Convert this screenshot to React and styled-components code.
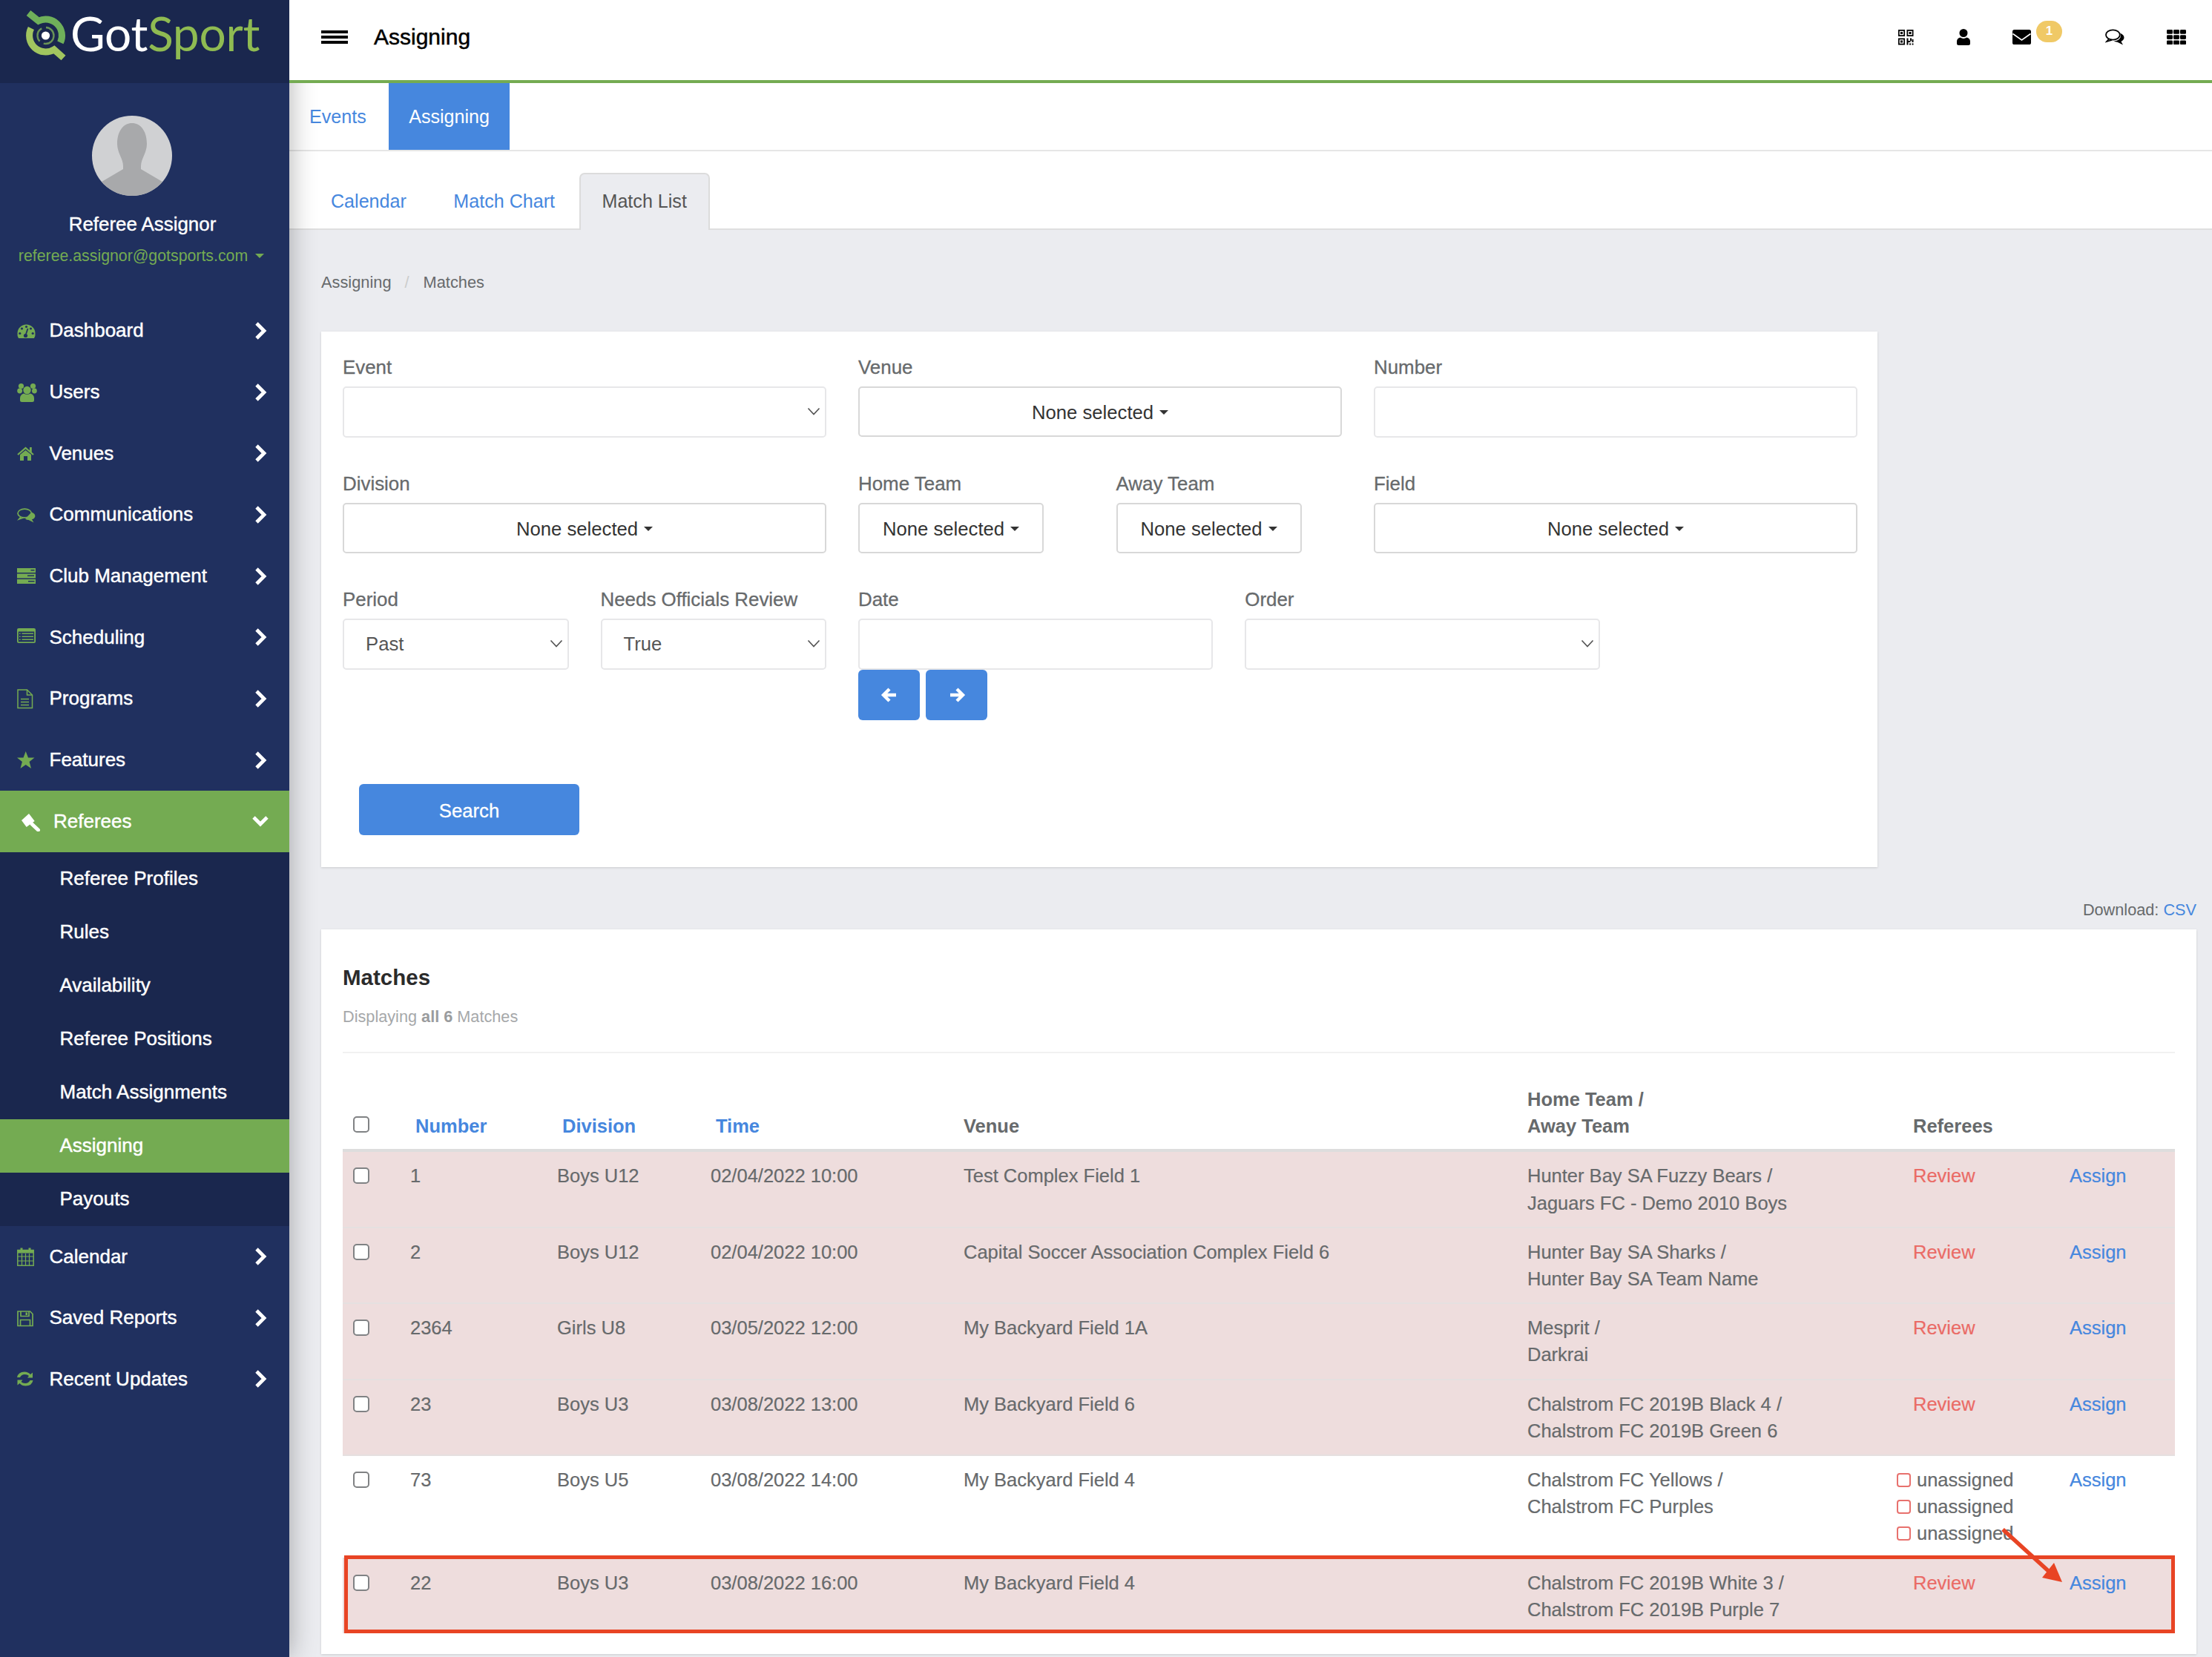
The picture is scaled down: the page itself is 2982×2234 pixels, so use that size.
import React from "react";
import styled, { createGlobalStyle } from "styled-components";

const GREEN = "#74ab52";
const BLUE = "#4687de";
const NAVY = "#20305f";
const DARK = "#1a274e";
const TEXT = "#676a6c";

const Global = createGlobalStyle`
  html, body { margin: 0; padding: 0; background: #ebecf0; }
  body { width: 2982px; height: 2234px; overflow: hidden; font-family: "Liberation Sans", Arial, sans-serif; font-size: 25.7px; color: ${TEXT}; }
  * { box-sizing: border-box; }
`;

const Page = styled.div`
  display: flex;
  width: 2982px;
  height: 2234px;
  overflow: hidden;
`;

/* ---------- sidebar ---------- */
const Sidebar = styled.aside`
  position: relative;
  z-index: 1;
  flex: 0 0 390px;
  height: 2234px;
  background: ${NAVY};
  box-shadow: 0 0 34px rgba(0, 0, 0, 0.32);
`;
const LogoBar = styled.div`
  height: 112px;
  background: ${DARK};
  display: flex;
  align-items: flex-start;
  padding: 5px 0 0 30px;
`;
const LogoWord = styled.div`
  font-family: Lato, "Liberation Sans", sans-serif;
  font-size: 64px;
  line-height: 74px;
  margin-top: 3px;
  letter-spacing: -0.3px;
  color: #fff;
  margin-left: 5px;
  span { color: #8fbb52; }
`;
const Profile = styled.div`
  height: 292.5px;
  display: flex;
  flex-direction: column;
  align-items: center;
  padding-top: 44px;
`;
const Avatar = styled.div`
  width: 108px;
  height: 108px;
  border-radius: 50%;
  overflow: hidden;
  background: #d0d1d3;
  margin-left: -34px;
  svg { display: block; }
`;
const ProfileName = styled.div`
  margin: 19px 0 0 -6px;
  color: #fff;
  font-size: 25.9px;
  line-height: 38px;
  -webkit-text-stroke: 0.4px #fff;
`;
const ProfileMail = styled.div`
  margin: 9px 0 0 -9px;
  color: ${GREEN};
  font-size: 21.3px;
  line-height: 30px;
  white-space: nowrap;
  display: flex;
  align-items: center;
  gap: 10px;
`;
const Caret = styled.i`
  display: inline-block;
  width: 0;
  height: 0;
  border-left: ${(p) => p.$size || 6}px solid transparent;
  border-right: ${(p) => p.$size || 6}px solid transparent;
  border-top: ${(p) => p.$size || 6}px solid ${(p) => p.$color || "#333"};
`;
const NavList = styled.nav`
  display: flex;
  flex-direction: column;
`;
const NavRow = styled.div`
  display: flex;
  align-items: center;
  height: 82.7px;
  padding: 0 ${(p) => (p.$open ? 27 : 30)}px 0 ${(p) => (p.$open ? 29 : 23)}px;
  background: ${(p) => (p.$open ? GREEN : "transparent")};
  color: #fff;
  font-size: 26px;
  -webkit-text-stroke: 0.45px #fff;
`;
const NavIconBox = styled.span`
  flex: 0 0 ${(p) => (p.$open ? 43 : 43.5)}px;
  height: 28px;
  svg { display: block; }
`;
const NavChevron = styled.svg`
  margin-left: auto;
  display: block;
`;
const SubList = styled.div`
  background: ${DARK};
`;
const SubRow = styled.div`
  height: 72px;
  padding-left: 80.5px;
  display: flex;
  align-items: center;
  color: #fff;
  font-size: 26px;
  background: ${(p) => (p.$active ? GREEN : "transparent")};
  -webkit-text-stroke: 0.45px #fff;
`;

/* ---------- main ---------- */
const Main = styled.main`
  flex: 1;
  min-width: 0;
  height: 2234px;
  display: flex;
  flex-direction: column;
`;
const TopBar = styled.header`
  position: relative;
  z-index: 2;
  height: 112px;
  flex: none;
  background: #fff;
  border-bottom: 4px solid ${GREEN};
  display: flex;
  align-items: center;
  padding: 0 35px 8px 43px;
`;
const PageTitle = styled.div`
  margin-left: 35px;
  font-size: 30px;
  color: #000;
  -webkit-text-stroke: 0.5px #000;
`;
const TopIcons = styled.div`
  margin-left: auto;
  display: flex;
  align-items: center;
  gap: 57.5px;
  svg { display: block; }
`;
const MailWrap = styled.div`
  position: relative;
  width: 67px;
`;
const Badge = styled.span`
  position: absolute;
  left: 32px;
  top: -12px;
  width: 35px;
  height: 29px;
  border-radius: 15px;
  background: #f0c966;
  color: #fff;
  font-size: 17px;
  font-weight: 700;
  line-height: 27px;
  text-align: center;
`;
const PrimaryTabs = styled.div`
  flex: none;
  height: 92px;
  background: #fff;
  border-bottom: 2px solid #e6e6e6;
  display: flex;
  gap: 3.5px;
`;
const PrimaryTab = styled.a`
  height: 90px;
  padding: 0 27px;
  display: flex;
  align-items: center;
  font-size: 25.1px;
  color: ${(p) => (p.$active ? "#fff" : BLUE)};
  background: ${(p) => (p.$active ? BLUE : "transparent")};
`;
const SubTabs = styled.div`
  flex: none;
  height: 106px;
  background: #fff;
  border-bottom: 2px solid #dfdfdf;
  padding: 29px 0 0 25px;
  display: flex;
  gap: 1.5px;
`;
const SubTab = styled.a`
  height: 77px;
  padding: 0 29px 2px;
  display: flex;
  align-items: center;
  font-size: 25.1px;
  border: 2px solid ${(p) => (p.$active ? "#dcdcdc" : "transparent")};
  border-bottom: 0;
  border-radius: 7px 7px 0 0;
  background: ${(p) => (p.$active ? "#ebecf0" : "transparent")};
  color: ${(p) => (p.$active ? "#555" : BLUE)};
  margin-bottom: -2px;
`;
const Content = styled.div`
  flex: 1;
  padding: 55px 21px 0 43px;
  background: #ebecf0;
`;
const Breadcrumb = styled.div`
  display: flex;
  height: 32px;
  align-items: center;
  font-size: 21.8px;
  color: ${TEXT};
  span { color: #ccc; margin: 0 19px 0 18px; }
`;
const FormCard = styled.section`
  margin-top: 50px;
  width: 2098px;
  height: 722px;
  background: #fff;
  padding: 30px 27px 0 29px;
  box-shadow: 0 1px 3px rgba(0, 0, 0, 0.14);
`;
const FormGrid = styled.div`
  display: grid;
  grid-template-columns: repeat(12, 1fr);
  column-gap: 43px;
  row-gap: 44px;
`;
const Field = styled.div`
  grid-column: ${(p) => p.$col} / span ${(p) => p.$span};
`;
const Label = styled.div`
  height: 36px;
  line-height: 36px;
  margin-bottom: 8px;
  font-size: 25.9px;
  color: ${TEXT};
  -webkit-text-stroke: 0.3px ${TEXT};
`;
const Control = styled.div`
  position: relative;
  height: 69px;
  border: 2px solid #e7e7e9;
  border-radius: 5px;
  background: #fff;
  padding: 0 29px;
  display: flex;
  align-items: center;
  color: #555;
`;
const SelectChevron = styled.svg`
  position: absolute;
  right: 6px;
  top: 25px;
`;
const MultiButton = styled.div`
  height: 68px;
  padding-top: 2px;
  width: ${(p) => (p.$narrow ? "250px" : "100%")};
  border: 2px solid #d8d8d8;
  border-radius: 5px;
  background: #fff;
  display: flex;
  align-items: center;
  justify-content: center;
  gap: 8px;
  color: #333;
`;
const ArrowRow = styled.div`
  display: flex;
  gap: 8px;
`;
const ArrowButton = styled.button`
  width: 83px;
  height: 68px;
  border: 0;
  border-radius: 6px;
  background: ${BLUE};
  padding: 0;
  display: flex;
  align-items: center;
  justify-content: center;
`;
const SearchButton = styled.button`
  display: block;
  margin: 86px 0 0 22px;
  width: 297px;
  height: 69px;
  border: 0;
  border-radius: 6px;
  background: ${BLUE};
  padding: 3px 0 0;
  color: #fff;
  font: 25.7px "Liberation Sans", Arial, sans-serif;
  -webkit-text-stroke: 0.3px #fff;
`;
const DownloadLine = styled.div`
  margin-top: 42px;
  height: 32px;
  line-height: 32px;
  text-align: right;
  font-size: 21.7px;
  color: ${TEXT};
  a { color: ${BLUE}; }
`;
const MatchesCard = styled.section`
  position: relative;
  margin-top: 10px;
  height: 977px;
  background: #fff;
  padding: 47px 29px 0 29px;
  box-shadow: 0 1px 3px rgba(0, 0, 0, 0.14);
`;
const Heading = styled.h2`
  margin: 0;
  height: 36px;
  line-height: 36px;
  font-size: 29.5px;
  font-weight: 700;
  color: #2b2b2b;
`;
const Summary = styled.div`
  margin-top: 19px;
  height: 32px;
  line-height: 32px;
  font-size: 21.7px;
  color: #a6a8aa;
  b { font-weight: 700; color: #9a9c9e; }
`;
const Rule = styled.hr`
  margin: 31px 0 44px;
  height: 2px;
  border: 0;
  background: #f1f1f1;
`;
const Table = styled.table`
  width: 2470px;
  table-layout: fixed;
  border-collapse: separate;
  border-spacing: 0;
  font-size: 25.5px;
  line-height: 36.2px;
`;
const Col = styled.col`
  width: ${(p) => p.$w}px;
`;
const Th = styled.th`
  padding: 0 11px 13px;
  text-align: left;
  vertical-align: bottom;
  font-weight: 700;
  color: ${TEXT};
  border-bottom: 4px solid #ddd;
  a { color: ${BLUE}; padding-left: 7px; }
`;
const Tr = styled.tr`
  background: ${(p) => (p.$flag ? "#eedddd" : "#fff")};
  &:not(:first-child) td { border-top: 2px solid #e5e0e0; }
`;
const Td = styled.td`
  padding: 14px 11px;
  vertical-align: top;
  color: ${TEXT};
  white-space: nowrap;
  -webkit-text-stroke: 0.2px;
`;
const Check = styled.input.attrs({ type: "checkbox" })`
  appearance: none;
  display: block;
  width: 22px;
  height: 22px;
  margin: ${(p) => (p.$head ? "0 0 9px 3px" : "7px 0 0 3px")};
  background: #fff;
  border: 2px solid #808284;
  border-radius: 5px;
`;
const Review = styled.a`
  color: #ea6b66;
`;
const Assign = styled.a`
  color: ${BLUE};
`;
const Unassigned = styled.div`
  display: flex;
  align-items: center;
  gap: 8px;
  margin-left: -22px;
  i {
    display: block;
    width: 19px;
    height: 19px;
    border: 2px solid #e8716d;
    border-radius: 4px;
  }
`;
const Highlight = styled.div`
  position: absolute;
  left: 31px;
  top: 844px;
  width: 2468px;
  height: 105px;
  border: 5px solid #e84424;
  pointer-events: none;
`;
const Pointer = styled.svg`
  position: absolute;
  left: 2257px;
  top: 799px;
  pointer-events: none;
`;

/* ---------- icons ---------- */
const g = GREEN;
const NavGlyphs = {
  dash: (
    <>
      <path d="M2 24Q0 21 .5 17.5A12 12 0 0 1 24.5 17.5Q25 21 23 24Z" fill={g} />
      <g fill={NAVY}>
        <circle cx="3.8" cy="17.5" r="1.6" /><circle cx="6.5" cy="11" r="1.6" /><circle cx="12.5" cy="8.5" r="1.6" /><circle cx="18.5" cy="11" r="1.6" /><circle cx="21.2" cy="17.5" r="1.6" /><circle cx="11.5" cy="20.5" r="2.6" />
      </g>
      <path d="M11.5 20L14.5 11" stroke={NAVY} strokeWidth="1.8" />
    </>
  ),
  users: (
    <g fill={g}>
      <circle cx="5.5" cy="5.5" r="3.6" /><circle cx="21.5" cy="5.5" r="3.6" /><circle cx="3.6" cy="12" r="3.4" /><circle cx="23.4" cy="12" r="3.4" /><circle cx="13.5" cy="11" r="5.2" />
      <path d="M6.5 27Q4 27 4 24.5V22Q4 17 9 15.5Q13.5 18 18 15.5Q23 17 23 22V24.5Q23 27 20.5 27Z" />
    </g>
  ),
  home: (
    <>
      <path d="M1 16L11.5 7L22 16" fill="none" stroke={g} strokeWidth="2.2" />
      <path d="M17 6h2.8v7H17zM4 16L11.5 10L19 16V24H14V18H9V24H4Z" fill={g} />
    </>
  ),
  chat: (
    <g fill="none" stroke={g} strokeWidth="1.7">
      <ellipse cx="10.2" cy="12" rx="9.2" ry="5.8" />
      <path d="M5 17L2.5 20L9 17.8" />
      <path d="M19.5 10.5Q25 12.5 24.3 16.5Q23.5 19.5 20 20.2L22.5 24.5L15.5 21Q13 21 11 19.5" fill={g} stroke="none" />
    </g>
  ),
  server: (
    <>
      <path d="M0 3h25v6H0zM0 10.5h25v6H0zM0 18h25v6H0z" fill={g} />
      <path d="M18.5 5h5v1.4h-5zM14 12.5h9v1.4h-9zM15 20h8.5v1.4H15z" fill={NAVY} />
    </>
  ),
  list: (
    <>
      <rect x="0" y="2" width="25" height="20" rx="2.2" fill={g} />
      <rect x="1.8" y="6.5" width="21.4" height="13.8" fill={NAVY} />
      <path d="M6.5 9.2H22M6.5 13.2H22M6.5 17.2H22" stroke={g} strokeWidth="1.6" />
      <path d="M3 8.5h1.6v1.5H3zM3 12.5h1.6v1.5H3zM3 16.5h1.6v1.5H3z" fill={g} />
    </>
  ),
  file: (
    <g fill="none" stroke={g} strokeWidth="1.5">
      <path d="M1 2H13.5L20.5 9V26.5H1Z" />
      <path d="M13.5 2V9H20.5" />
      <path d="M5 14.5H16M5 18.5H16M5 22.5H16" strokeWidth="1.7" />
    </g>
  ),
  star: <path d="M11.7 2L15 10.5H23.5L16.6 16L19 25L11.7 20L4.5 25L6.9 16L0 10.5H8.5Z" fill={g} />,
  gavel: (
    <>
      <path d="M0 13L10 4L17.7 14L6.7 22Z" fill="#fff" />
      <path d="M14 18L22.5 26" stroke="#fff" strokeWidth="5" strokeLinecap="round" />
    </>
  ),
  calendar: (
    <g fill="none" stroke={g}>
      <rect x=".8" y="5.5" width="21.4" height="20.7" strokeWidth="1.5" />
      <path d="M1 7.5H22" strokeWidth="4" />
      <path d="M6 2.5V7M17 2.5V7" strokeWidth="3" />
      <path d="M1 14H22M1 20H22M6.5 10V26M11.5 10V26M16.5 10V26" strokeWidth="1.2" />
    </g>
  ),
  save: (
    <g fill="none" stroke={g} strokeWidth="1.7">
      <path d="M1 5H17.5L21 8.5V24.5H1Z" />
      <path d="M5 5V11.5H16V5M4.5 24.5V16.5H17.5V24.5" />
      <path d="M11.5 6.5h2.5V10h-2.5z" fill={g} stroke="none" />
    </g>
  ),
  refresh: (
    <g fill={g}>
      <path d="M0 12Q1.5 4.5 10 4.5Q15 4.5 18 8L21 5.5V12.5H14L16 10Q14 8 10.5 8Q6 8 4 12Z" />
      <path d="M21.5 16Q20 23.5 11.5 23.5Q6.5 23.5 3.5 20L.5 22.5V15.5H7.5L5.5 18Q7.5 20 11 20Q15.5 20 17.5 16Z" />
    </g>
  ),
};

const NavGlyph = ({ name }) => (
  <svg width="28" height="28" viewBox="0 0 28 28">{NavGlyphs[name]}</svg>
);

const Chevron = () => (
  <NavChevron width="17" height="26" viewBox="0 0 17 26">
    <path d="M3 3L13 13L3 23" fill="none" stroke="#fff" strokeWidth="4.8" />
  </NavChevron>
);
const ChevronDown = () => (
  <NavChevron width="24" height="16" viewBox="0 0 24 16">
    <path d="M3 3L12 12L21 3" fill="none" stroke="#fff" strokeWidth="4.8" />
  </NavChevron>
);

const Logo = () => (
  <svg width="60" height="80" viewBox="30 5 60 80">
    <g fill="none" strokeWidth="9">
      <path d="M38.5 17.5L51.9 28.2A22 22 0 0 1 81.4 57.4" stroke="#6fb05a" />
      <path d="M41.9 38.1A22 22 0 0 0 72.9 66.8L85.5 78" stroke="#a1c55f" />
      <circle cx="61.5" cy="48" r="11" stroke="#84b85a" strokeWidth="2.4" strokeDasharray="20 6" opacity=".75" />
    </g>
    <circle cx="61.5" cy="48" r="5.6" fill="#fff" />
  </svg>
);

const Silhouette = () => (
  <svg width="108" height="108" viewBox="0 0 108 108">
    <path d="M54 10C43 10 34 20 34 38C34 50 42 58 42 68V72L8 92V108H100V92L66 72V68C66 58 74 50 74 38C74 20 65 10 54 10Z" fill="#a8a9ab" />
  </svg>
);

const Qr = () => (
  <svg width="21" height="21" viewBox="0 0 21 21">
    <path fillRule="evenodd" d="M0 0h9v9H0zM1.7 1.7v5.6h5.6V1.7zM11.5 0h9v9h-9zM13.2 1.7v5.6h5.6V1.7zM0 11.5h9v9H0zM1.7 13.2v5.6h5.6v-5.6z" />
    <path d="M3 3h3v3H3zM14.5 3h3v3h-3zM3 14.5h3v3H3zM11.5 11.5h2v9h-2zM13.5 15h3v2h-3zM16 11.5h2v3.5h-2zM18.5 13h2v4h-2zM15 18.5h2v2h-2zM18.5 18.5h2v2h-2z" />
  </svg>
);
const Person = () => (
  <svg width="18" height="22" viewBox="0 0 18 22">
    <circle cx="9" cy="5.5" r="5.5" />
    <path d="M2.5 22Q0 22 0 19.5V17Q0 12.8 4.6 11.6Q9 14.2 13.4 11.6Q18 12.8 18 17V19.5Q18 22 15.5 22Z" />
  </svg>
);
const Mail = () => (
  <svg width="25" height="20" viewBox="0 0 25 20">
    <rect width="25" height="20" rx="2.6" />
    <path d="M0.5 5.5L12.5 14L24.5 5.5" fill="none" stroke="#fff" strokeWidth="1.6" />
  </svg>
);
const Chat = () => (
  <svg width="26" height="22" viewBox="0 0 26 22">
    <ellipse cx="10.4" cy="8" rx="9.4" ry="6.6" fill="none" stroke="#000" strokeWidth="1.8" />
    <path d="M5 13.5L2 17L9 15" fill="none" stroke="#000" strokeWidth="1.6" />
    <path d="M20 5.5Q26 8 25.5 12.5Q24.5 16 21.5 17L24 21.5L16.5 17.8Q13.5 17.6 11.5 16.2Q18 16.5 20.5 11.5Q21.5 8 20 5.5Z" />
  </svg>
);
const Apps = () => (
  <svg width="26" height="20" viewBox="0 0 26 20">
    {[0, 7.2, 14.4].flatMap((y) =>
      [0, 9, 18].map((x) => <rect key={`${x}-${y}`} x={x} y={y} width="8" height="5.8" rx="1.4" />)
    )}
  </svg>
);
const Burger = () => (
  <svg width="36" height="18" viewBox="0 0 36 18">
    <path d="M0 0h36v4H0zM0 7h36v4H0zM0 14h36v4H0z" />
  </svg>
);

const SelectIcon = () => (
  <SelectChevron width="18" height="14" viewBox="0 0 18 14">
    <path d="M1.5 2.5L9 10.5L16.5 2.5" fill="none" stroke="#555" strokeWidth="1.7" />
  </SelectChevron>
);

/* ---------- data ---------- */
const NAV_TOP = [
  ["dash", "Dashboard"],
  ["users", "Users"],
  ["home", "Venues"],
  ["chat", "Communications"],
  ["server", "Club Management"],
  ["list", "Scheduling"],
  ["file", "Programs"],
  ["star", "Features"],
];
const SUB = ["Referee Profiles", "Rules", "Availability", "Referee Positions", "Match Assignments", "Assigning", "Payouts"];
const NAV_BOTTOM = [
  ["calendar", "Calendar"],
  ["save", "Saved Reports"],
  ["refresh", "Recent Updates"],
];
const COLS = [80, 198, 207, 341, 760, 520, 211, 153];
const ROWS = [
  { n: "1", d: "Boys U12", t: "02/04/2022 10:00", v: "Test Complex Field 1", h: "Hunter Bay SA Fuzzy Bears /", a: "Jaguars FC - Demo 2010 Boys", flag: true },
  { n: "2", d: "Boys U12", t: "02/04/2022 10:00", v: "Capital Soccer Association Complex Field 6", h: "Hunter Bay SA Sharks /", a: "Hunter Bay SA Team Name", flag: true },
  { n: "2364", d: "Girls U8", t: "03/05/2022 12:00", v: "My Backyard Field 1A", h: "Mesprit /", a: "Darkrai", flag: true },
  { n: "23", d: "Boys U3", t: "03/08/2022 13:00", v: "My Backyard Field 6", h: "Chalstrom FC 2019B Black 4 /", a: "Chalstrom FC 2019B Green 6", flag: true },
  { n: "73", d: "Boys U5", t: "03/08/2022 14:00", v: "My Backyard Field 4", h: "Chalstrom FC Yellows /", a: "Chalstrom FC Purples", flag: false },
  { n: "22", d: "Boys U3", t: "03/08/2022 16:00", v: "My Backyard Field 4", h: "Chalstrom FC 2019B White 3 /", a: "Chalstrom FC 2019B Purple 7", flag: true },
];

const Multi = ({ narrow }) => (
  <MultiButton $narrow={narrow}>
    None selected <Caret $size={6.5} />
  </MultiButton>
);

export default function App() {
  return (
    <Page>
      <Global />
      <Sidebar>
        <LogoBar>
          <Logo />
          <LogoWord>Got<span>Sport</span></LogoWord>
        </LogoBar>
        <Profile>
          <Avatar><Silhouette /></Avatar>
          <ProfileName>Referee Assignor</ProfileName>
          <ProfileMail>referee.assignor@gotsports.com <Caret $size={6.5} $color={GREEN} /></ProfileMail>
        </Profile>
        <NavList>
          {NAV_TOP.map(([icon, label]) => (
            <NavRow key={label}>
              <NavIconBox><NavGlyph name={icon} /></NavIconBox>
              {label}
              <Chevron />
            </NavRow>
          ))}
          <NavRow $open>
            <NavIconBox $open><NavGlyph name="gavel" /></NavIconBox>
            Referees
            <ChevronDown />
          </NavRow>
          <SubList>
            {SUB.map((s) => (
              <SubRow key={s} $active={s === "Assigning"}>{s}</SubRow>
            ))}
          </SubList>
          {NAV_BOTTOM.map(([icon, label]) => (
            <NavRow key={label}>
              <NavIconBox><NavGlyph name={icon} /></NavIconBox>
              {label}
              <Chevron />
            </NavRow>
          ))}
        </NavList>
      </Sidebar>

      <Main>
        <TopBar>
          <Burger />
          <PageTitle>Assigning</PageTitle>
          <TopIcons>
            <Qr />
            <Person />
            <MailWrap>
              <Mail />
              <Badge>1</Badge>
            </MailWrap>
            <Chat />
            <Apps />
          </TopIcons>
        </TopBar>
        <PrimaryTabs>
          <PrimaryTab>Events</PrimaryTab>
          <PrimaryTab $active>Assigning</PrimaryTab>
        </PrimaryTabs>
        <SubTabs>
          <SubTab>Calendar</SubTab>
          <SubTab>Match Chart</SubTab>
          <SubTab $active>Match List</SubTab>
        </SubTabs>
        <Content>
          <Breadcrumb>Assigning<span>/</span>Matches</Breadcrumb>
          <FormCard>
            <FormGrid>
              <Field $col={1} $span={4}>
                <Label>Event</Label>
                <Control><SelectIcon /></Control>
              </Field>
              <Field $col={5} $span={4}>
                <Label>Venue</Label>
                <Multi />
              </Field>
              <Field $col={9} $span={4}>
                <Label>Number</Label>
                <Control />
              </Field>
              <Field $col={1} $span={4}>
                <Label>Division</Label>
                <Multi />
              </Field>
              <Field $col={5} $span={2}>
                <Label>Home Team</Label>
                <Multi narrow />
              </Field>
              <Field $col={7} $span={2}>
                <Label>Away Team</Label>
                <Multi narrow />
              </Field>
              <Field $col={9} $span={4}>
                <Label>Field</Label>
                <Multi />
              </Field>
              <Field $col={1} $span={2}>
                <Label>Period</Label>
                <Control>Past<SelectIcon /></Control>
              </Field>
              <Field $col={3} $span={2}>
                <Label>Needs Officials Review</Label>
                <Control>True<SelectIcon /></Control>
              </Field>
              <Field $col={5} $span={3}>
                <Label>Date</Label>
                <Control />
                <ArrowRow>
                  <ArrowButton aria-label="Previous">
                    <svg width="24" height="24" viewBox="0 0 24 24">
                      <path d="M21 12H5M12 4L4 12L12 20" fill="none" stroke="#fff" strokeWidth="4.4" />
                    </svg>
                  </ArrowButton>
                  <ArrowButton aria-label="Next">
                    <svg width="24" height="24" viewBox="0 0 24 24">
                      <path d="M3 12H19M12 4L20 12L12 20" fill="none" stroke="#fff" strokeWidth="4.4" />
                    </svg>
                  </ArrowButton>
                </ArrowRow>
              </Field>
              <Field $col={8} $span={3}>
                <Label>Order</Label>
                <Control><SelectIcon /></Control>
              </Field>
            </FormGrid>
            <SearchButton>Search</SearchButton>
          </FormCard>
          <DownloadLine>Download: <a>CSV</a></DownloadLine>
          <MatchesCard>
            <Heading>Matches</Heading>
            <Summary>Displaying <b>all 6</b> Matches</Summary>
            <Rule />
            <Table>
              <colgroup>
                {COLS.map((w, i) => <Col key={i} $w={w} />)}
              </colgroup>
              <thead>
                <tr>
                  <Th><Check $head /></Th>
                  <Th><a>Number</a></Th>
                  <Th><a>Division</a></Th>
                  <Th><a>Time</a></Th>
                  <Th>Venue</Th>
                  <Th>Home Team /<br />Away Team</Th>
                  <Th>Referees</Th>
                  <Th />
                </tr>
              </thead>
              <tbody>
                {ROWS.map((r) => (
                  <Tr key={r.n} $flag={r.flag}>
                    <Td><Check /></Td>
                    <Td>{r.n}</Td>
                    <Td>{r.d}</Td>
                    <Td>{r.t}</Td>
                    <Td>{r.v}</Td>
                    <Td>{r.h}<br />{r.a}</Td>
                    <Td>
                      {r.flag ? (
                        <Review>Review</Review>
                      ) : (
                        [0, 1, 2].map((i) => <Unassigned key={i}><i />unassigned</Unassigned>)
                      )}
                    </Td>
                    <Td><Assign>Assign</Assign></Td>
                  </Tr>
                ))}
              </tbody>
            </Table>
            <Highlight />
            <Pointer width="100" height="90" viewBox="0 0 100 90">
              <path d="M10 10L78 72" stroke="#e84424" strokeWidth="5.5" fill="none" />
              <path d="M90 81L63 75L79 55Z" fill="#e84424" />
            </Pointer>
          </MatchesCard>
        </Content>
      </Main>
    </Page>
  );
}
